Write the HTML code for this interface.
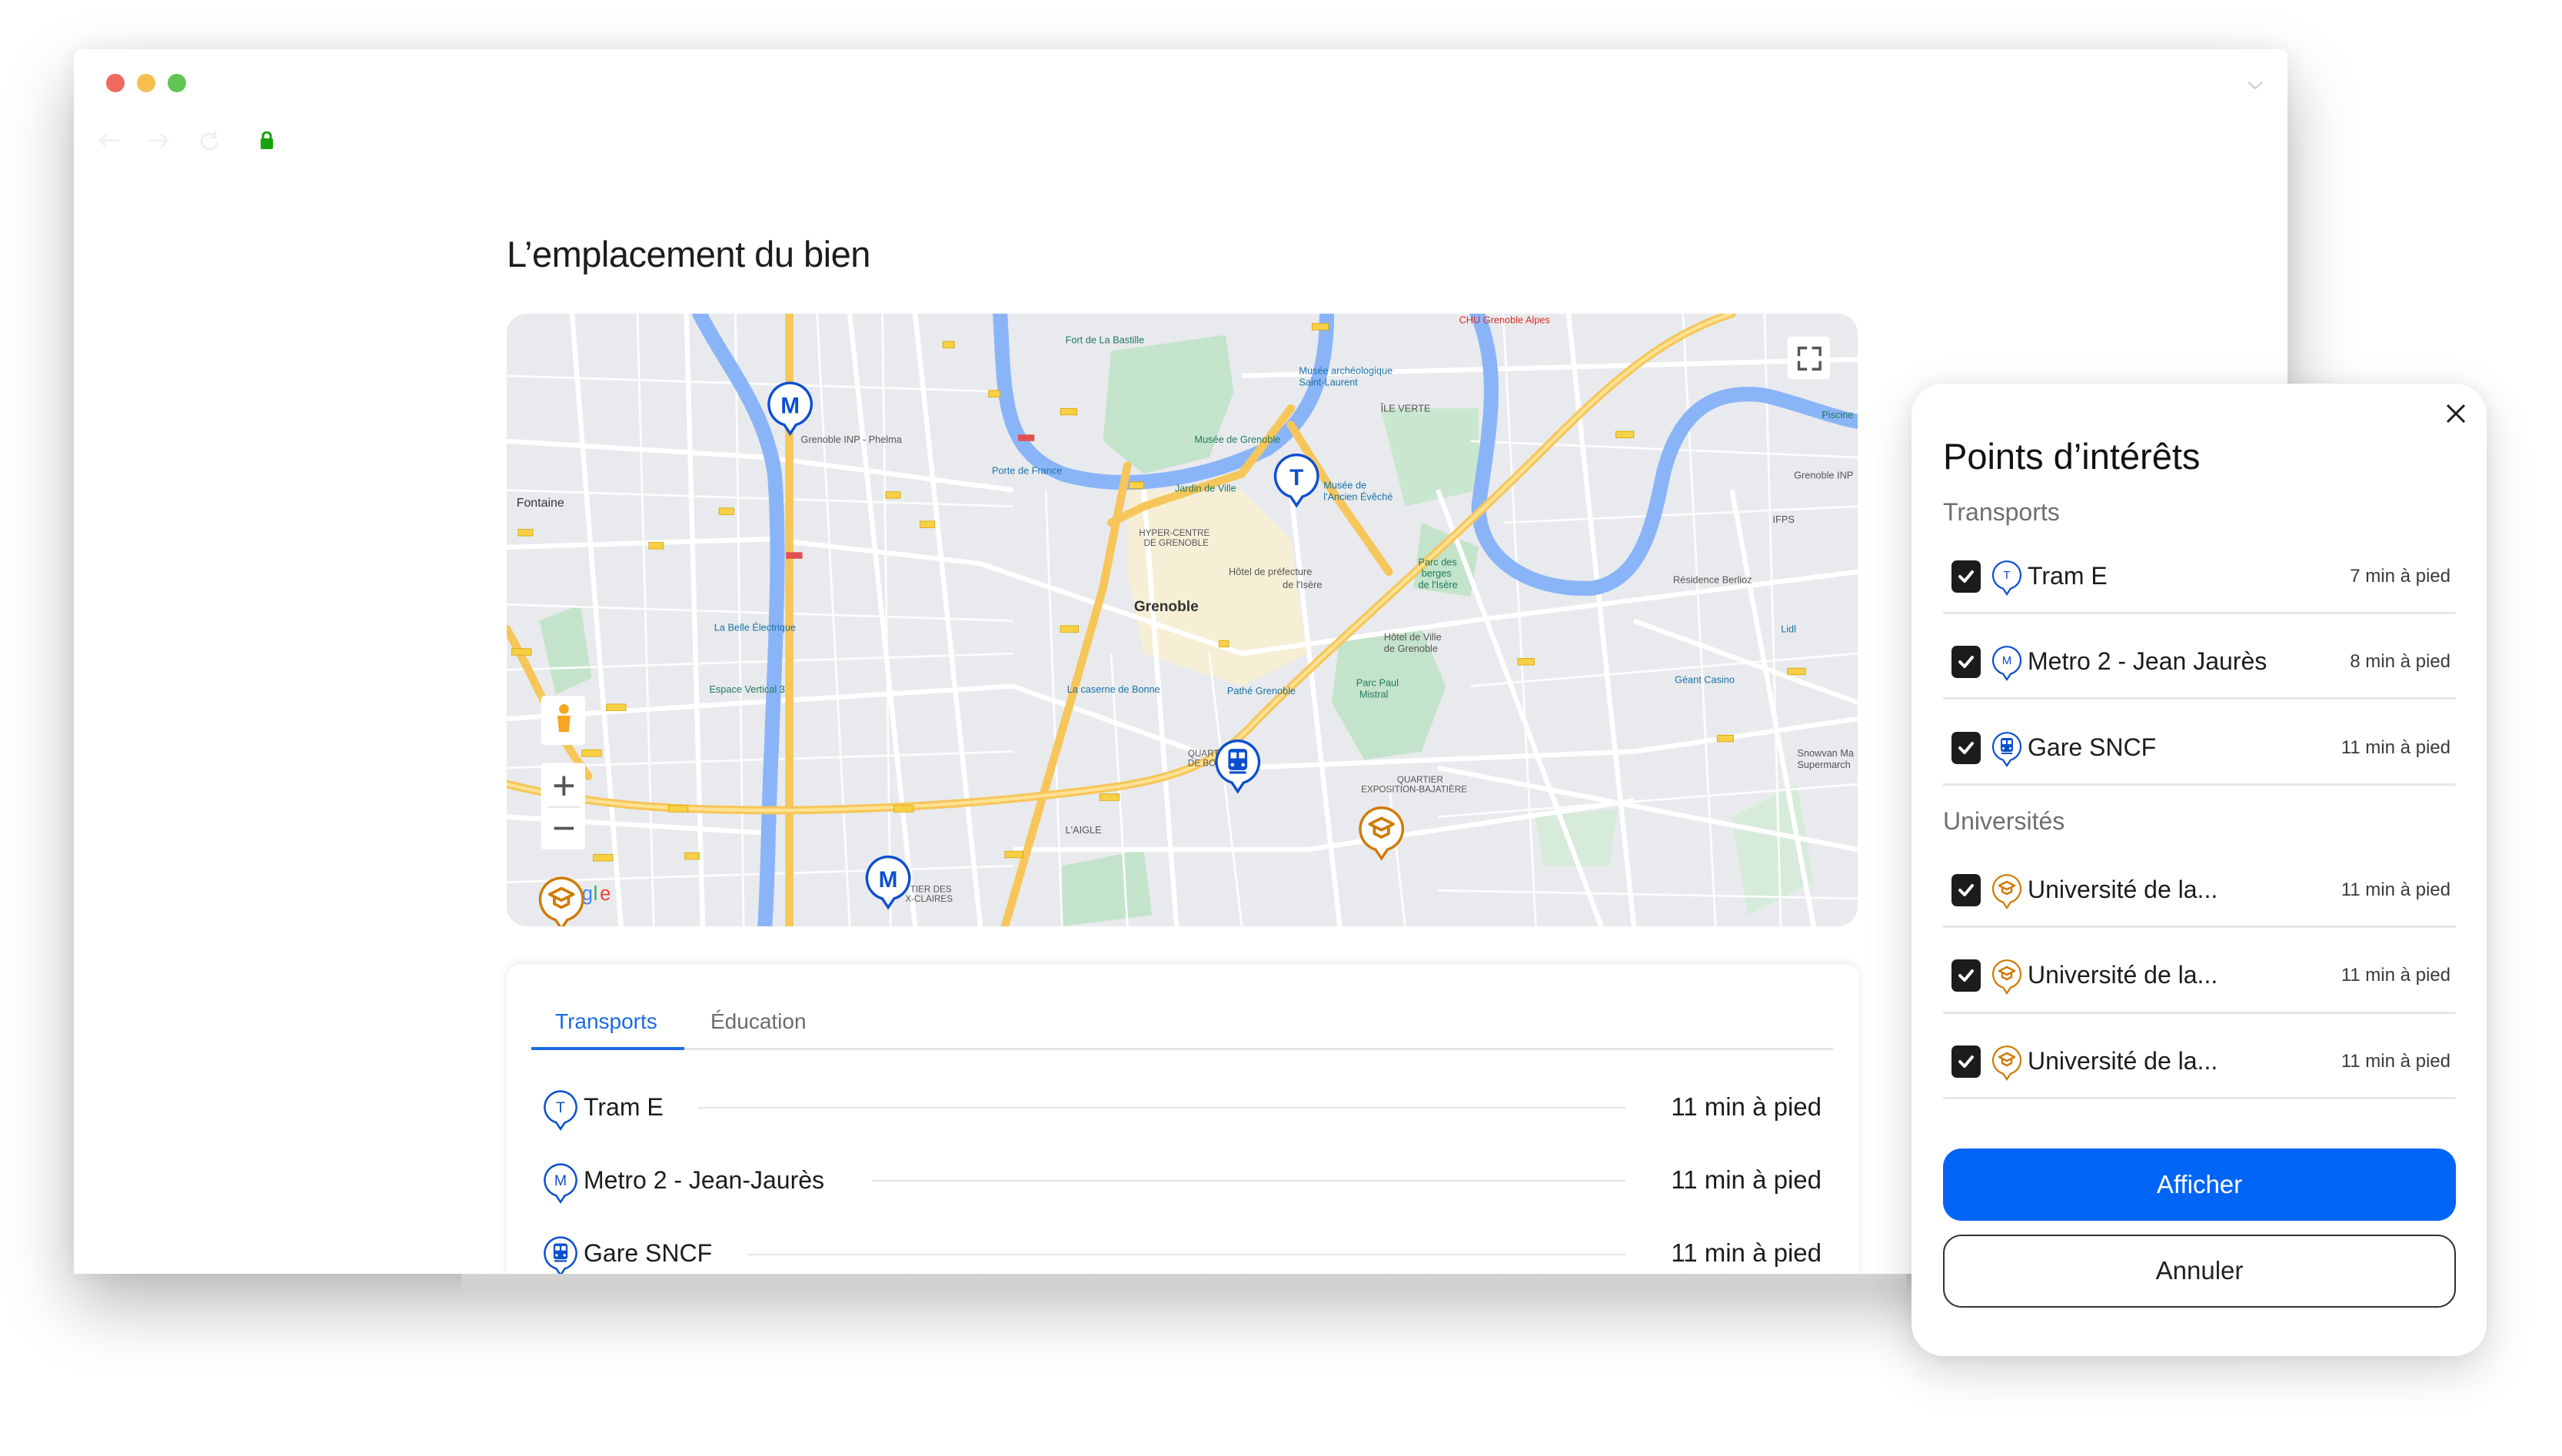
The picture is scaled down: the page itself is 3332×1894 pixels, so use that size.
<!DOCTYPE html>
<html><head><meta charset="utf-8">
<style>
*{box-sizing:border-box;margin:0;padding:0}
body{width:3332px;height:1894px;background:#fff;position:relative;overflow:hidden;font-family:"Liberation Sans",sans-serif;color:#1c1c1e}
.abs{position:absolute}
.win{left:96px;top:64px;width:2879px;height:1593px;background:#fff;box-shadow:0 40px 90px rgba(0,0,0,.28),0 0 30px rgba(0,0,0,.06);border-radius:10px 10px 0 0;overflow:hidden}
.dot{width:24px;height:24px;border-radius:50%;top:96px}
.title{left:659px;top:303px;font-size:47px;color:#1c1c1e;letter-spacing:-0.5px}
.map{left:659px;top:408px;width:1757px;height:797px;border-radius:26px;overflow:hidden;background:#e8eaed}
.card{left:659px;top:1254px;width:1759px;height:403px;background:#fff;border-radius:18px 18px 0 0;box-shadow:0 -2px 10px rgba(0,0,0,.10)}
.tab{top:1313px;font-size:28px}
.row{left:759px;font-size:32px;color:#1c1c1e}
.rt{font-size:33px;color:#1c1c1e;right:963px}
.hl{height:3px;background:#e4e4ea}
.panel{left:2486px;top:499px;width:748px;height:1265px;background:#fff;border-radius:42px;box-shadow:0 20px 60px rgba(0,0,0,.16),0 0 20px rgba(0,0,0,.06)}
.cb{left:2538px;width:38px;height:42px;background:#1c1c1e;border-radius:7px}
.pt{left:2637px;font-size:32px;color:#1c1c1e}
.pr{right:145px;font-size:24px;color:#3a3a3c}
.div{left:2527px;width:667px;height:3px;background:#e6e6ea}
.sec{left:2527px;font-size:32px;color:#6e6e73}
</style></head><body>
<svg width="0" height="0" style="position:absolute">
<defs>
<symbol id="pin" viewBox="0 0 40 48"><path d="M20 46 L15 38.5 A18 18 0 1 1 25 38.5 Z" fill="#fff" stroke="currentColor" stroke-width="2.2"/></symbol>
<symbol id="chk" viewBox="0 0 38 42"><path d="M11 21 L17 27 L27 15" fill="none" stroke="#fff" stroke-width="4" stroke-linecap="round" stroke-linejoin="round"/></symbol>
<symbol id="cap" viewBox="0 0 40 48"><path d="M20 46 L15 38.5 A18 18 0 1 1 25 38.5 Z" fill="#fff" stroke="#d07a00" stroke-width="2.2"/><path d="M10 17 L20 12 L30 17 L20 22 Z M14 19 V25 L20 28 L26 25 V19" fill="none" stroke="#d07a00" stroke-width="2.4" stroke-linejoin="round"/></symbol>
<symbol id="train" viewBox="0 0 40 48"><path d="M20 46 L15 38.5 A18 18 0 1 1 25 38.5 Z" fill="#fff" stroke="#0b4fd0" stroke-width="2.2"/><rect x="12" y="10" width="16" height="18" rx="3" fill="#0b4fd0"/><rect x="14" y="13" width="5" height="5" fill="#fff"/><rect x="21" y="13" width="5" height="5" fill="#fff"/><circle cx="15.5" cy="23.5" r="1.5" fill="#fff"/><circle cx="24.5" cy="23.5" r="1.5" fill="#fff"/><path d="M13 30 h14" stroke="#0b4fd0" stroke-width="2"/></symbol>
</defs></svg>

<div class="abs win"></div>
<div class="abs dot" style="left:138px;background:#ee6a5f"></div>
<div class="abs dot" style="left:178px;background:#f5bf4f"></div>
<div class="abs dot" style="left:218px;background:#61c554"></div>
<svg class="abs" style="left:126px;top:168px" width="160" height="30" viewBox="0 0 160 30" fill="none" stroke="#eef0f2" stroke-width="3" stroke-linecap="round"><path d="M4 15 H28 M4 15 L12 7 M4 15 L12 23"/><path d="M68 15 H92 M92 15 L84 7 M92 15 L84 23"/><path d="M154 10 A10 10 0 1 0 156 18 M154 4 V11 H147"/></svg>
<svg class="abs" style="left:338px;top:171px" width="18" height="24" viewBox="0 0 18 24"><path d="M4 10 V6 A5 5 0 0 1 14 6 V10" fill="none" stroke="#16a30c" stroke-width="3"/><rect x="1" y="9" width="16" height="14" rx="2" fill="#16a30c"/></svg>
<svg class="abs" style="left:2922px;top:104px" width="22" height="14" viewBox="0 0 22 14"><path d="M2 3 L11 11 L20 3" fill="none" stroke="#c8c8cc" stroke-width="2"/></svg>

<div class="abs title">L’emplacement du bien</div>

<div class="abs map">
<svg width="1757" height="797" viewBox="310 192 827 375" preserveAspectRatio="none" font-family="Liberation Sans,sans-serif">
<rect x="310" y="192" width="827" height="375" fill="#e8eaed"/>
<path d="M690 300 L760 300 L790 330 L800 400 L760 420 L700 400 L690 350 Z" fill="#f6efd6"/>
<path d="M680 215 L750 205 L755 240 L740 280 L700 290 L675 270 Z" fill="#c4e3cb"/>
<path d="M820 390 L870 385 L885 420 L870 460 L835 465 L815 430 Z" fill="#c4e3cb"/>
<path d="M330 380 L355 370 L362 415 L340 425 Z" fill="#c4e3cb"/>
<path d="M845 250 L905 250 L905 300 L860 310 Z" fill="#c9e6cf"/>
<path d="M870 320 L905 335 L900 365 L865 360 Z" fill="#c4e3cb"/>
<path d="M650 530 L700 520 L705 560 L650 567 Z" fill="#c4e3cb"/>
<path d="M1060 500 L1100 480 L1110 540 L1070 560 Z" fill="#d6ebd9"/>
<path d="M940 500 L990 495 L985 530 L945 530 Z" fill="#d6ebd9"/>
<g stroke="#fff" stroke-width="3" fill="none">
<path d="M310 335 L470 330 L600 345 L760 400 L900 380 L1137 350"/>
<path d="M310 440 L460 430 L620 420 L760 470 L1000 460 L1137 440"/>
<path d="M350 192 L380 567"/><path d="M420 192 L430 567"/><path d="M560 192 L600 567"/>
<path d="M700 300 L720 567"/><path d="M790 300 L820 567"/><path d="M880 300 L980 567"/>
<path d="M960 192 L1000 567"/><path d="M1060 300 L1110 567"/>
<path d="M310 270 L470 280 L620 300"/><path d="M520 192 L560 567"/>
<path d="M880 470 L1137 520"/><path d="M1000 380 L1137 430"/><path d="M310 500 L470 510"/>
<path d="M620 520 L800 520 L1000 490"/><path d="M760 230 L1137 220"/>
</g>
<g stroke="#fff" stroke-width="1.3" fill="none" opacity=".9">
<path d="M310 230 L620 240"/><path d="M310 300 L620 310"/><path d="M310 370 L620 380"/><path d="M310 410 L620 400"/><path d="M310 470 L620 460"/><path d="M310 540 L620 530"/>
<path d="M900 270 L1137 280"/><path d="M920 320 L1137 310"/><path d="M900 420 L1137 400"/><path d="M880 500 L1137 480"/><path d="M880 545 L1137 550"/>
<path d="M390 192 L400 567"/><path d="M450 192 L455 567"/><path d="M500 192 L520 567"/><path d="M540 192 L545 567"/><path d="M640 300 L650 567"/><path d="M680 400 L690 567"/><path d="M740 400 L760 567"/><path d="M850 480 L860 567"/><path d="M920 192 L940 567"/><path d="M1030 192 L1050 567"/><path d="M1080 192 L1090 567"/>
</g>
<g fill="none" stroke="#8ab4f8" stroke-width="9" stroke-linecap="round">
<path d="M428 192 C445 225 468 250 474 290 C478 340 474 400 472 460 C470 500 470 540 468 567"/>
<path d="M612 192 C615 240 612 275 650 290 C690 302 740 292 775 275 C805 255 812 225 812 192"/>
<path d="M904 192 C920 230 910 270 905 310 C905 345 940 362 975 360 C1005 355 1012 320 1018 290 C1028 250 1050 238 1080 242 C1105 248 1120 255 1137 258"/>
</g>
<g fill="none" stroke="#f7c65a" stroke-width="5" stroke-linecap="round">
<path d="M310 480 C360 492 400 496 480 496 C560 495 620 490 680 482 C730 475 750 462 770 440 C820 390 880 340 950 270 C990 230 1020 205 1060 192"/>
<path d="M483 192 L483 567"/>
<path d="M690 285 L675 360 L655 430 L615 567"/>
<path d="M310 385 C330 420 340 450 360 475"/>
<path d="M790 260 L815 300 L850 350"/>
<path d="M790 250 L760 290 L700 310 L680 320"/>
</g>
<g fill="none" stroke="#fde293" stroke-width="2"><path d="M310 480 C360 492 400 496 480 496 C560 495 620 490 680 482 C730 475 750 462 770 440 C820 390 880 340 950 270 C990 230 1020 205 1060 192"/></g>
<g font-size="7" fill="#555">
<text x="316" y="310" font-size="7.5" fill="#333">Fontaine</text>
<text x="694" y="374" font-size="9" font-weight="bold" fill="#333">Grenoble</text>
<text x="697" y="328" font-size="5.5">HYPER-CENTRE</text><text x="700" y="334" font-size="5.5">DE GRENOBLE</text>
<text x="752" y="352" font-size="6">Hôtel de préfecture</text><text x="785" y="360" font-size="6">de l'Isère</text>
<text x="490" y="271" font-size="6">Grenoble INP - Phelma</text>
<text x="845" y="252" font-size="6">ÎLE VERTE</text>
<text x="652" y="210" font-size="6" fill="#1f7a5c">Fort de La Bastille</text>
<text x="795" y="229" font-size="6" fill="#1a73a8">Musée archéologique</text><text x="795" y="236" font-size="6" fill="#1a73a8">Saint-Laurent</text>
<text x="893" y="198" font-size="6" fill="#d93025">CHU Grenoble Alpes</text>
<text x="731" y="271" font-size="6" fill="#1f7a5c">Musée de Grenoble</text>
<text x="607" y="290" font-size="6" fill="#1a73a8">Porte de France</text>
<text x="719" y="301" font-size="6" fill="#1f7a5c">Jardin de Ville</text>
<text x="810" y="299" font-size="6" fill="#1a73a8">Musée de</text><text x="810" y="306" font-size="6" fill="#1a73a8">l'Ancien Évêché</text>
<text x="868" y="346" font-size="6" fill="#1f7a5c">Parc des</text><text x="870" y="353" font-size="6" fill="#1f7a5c">berges</text><text x="868" y="360" font-size="6" fill="#1f7a5c">de l'Isère</text>
<text x="437" y="386" font-size="6" fill="#1a73a8">La Belle Électrique</text>
<text x="434" y="424" font-size="6" fill="#1f7a5c">Espace Vertical 3</text>
<text x="653" y="424" font-size="6" fill="#1a73a8">La caserne de Bonne</text>
<text x="751" y="425" font-size="6" fill="#1a73a8">Pathé Grenoble</text>
<text x="830" y="420" font-size="6" fill="#1f7a5c">Parc Paul</text><text x="832" y="427" font-size="6" fill="#1f7a5c">Mistral</text>
<text x="847" y="392" font-size="6">Hôtel de Ville</text><text x="847" y="399" font-size="6">de Grenoble</text>
<text x="1024" y="357" font-size="6">Résidence Berlioz</text>
<text x="1025" y="418" font-size="6" fill="#1a73a8">Géant Casino</text>
<text x="1098" y="293" font-size="6">Grenoble INP</text>
<text x="1085" y="320" font-size="6">IFPS</text>
<text x="1090" y="387" font-size="6" fill="#1a73a8">Lidl</text>
<text x="1115" y="256" font-size="6" fill="#1f7a5c">Piscine</text>
<text x="1100" y="463" font-size="6">Snowvan Ma</text><text x="1100" y="470" font-size="6">Supermarch</text>
<text x="855" y="479" font-size="5.5">QUARTIER</text><text x="833" y="485" font-size="5.5">EXPOSITION-BAJATIÈRE</text>
<text x="652" y="510" font-size="6">L'AIGLE</text>
<text x="557" y="546" font-size="5.5">TIER DES</text><text x="554" y="552" font-size="5.5">X-CLAIRES</text>
<text x="727" y="463" font-size="5.5">QUART</text><text x="727" y="469" font-size="5.5">DE BO</text>
</g>
<g fill="#f7d046" stroke="#d8a600" stroke-width=".4">
<rect x="577" y="209" width="7" height="4"/><rect x="605" y="239" width="7" height="4"/><rect x="649" y="250" width="10" height="4"/><rect x="803" y="198" width="10" height="4"/>
<rect x="542" y="301" width="9" height="4"/><rect x="563" y="319" width="9" height="4"/><rect x="440" y="311" width="9" height="4"/><rect x="397" y="332" width="9" height="4"/><rect x="317" y="324" width="9" height="4"/>
<rect x="649" y="383" width="11" height="4"/><rect x="746" y="392" width="6" height="4"/><rect x="929" y="403" width="10" height="4"/><rect x="1094" y="409" width="11" height="4"/><rect x="1051" y="450" width="10" height="4"/><rect x="989" y="264" width="11" height="4"/>
<rect x="371" y="431" width="12" height="4"/><rect x="356" y="459" width="12" height="4"/><rect x="409" y="493" width="12" height="4"/><rect x="547" y="493" width="12" height="4"/><rect x="673" y="486" width="12" height="4"/><rect x="615" y="521" width="11" height="4"/><rect x="363" y="523" width="12" height="4"/><rect x="419" y="522" width="9" height="4"/><rect x="313" y="397" width="12" height="4"/><rect x="691" y="295" width="9" height="4"/>
</g>
<rect x="623" y="266" width="10" height="4" fill="#e05050"/><rect x="481" y="338" width="10" height="4" fill="#e05050"/>
<rect x="1094" y="206" width="26" height="26" rx="2" fill="#fff"/>
<path d="M1101 218 V213 H1106 M1109 213 H1114 V218 M1114 221 V226 H1109 M1106 226 H1101 V221" fill="none" stroke="#555" stroke-width="1.6"/>
<rect x="331" y="426" width="27" height="30" rx="2" fill="#fff"/>
<circle cx="345" cy="434" r="3" fill="#f5a623"/><path d="M341 438 H349 L348 448 H342 Z" fill="#f5a623"/>
<rect x="331" y="467" width="27" height="53" rx="2" fill="#fff"/>
<path d="M339 481 H351 M345 475 V487 M339 507 H351" stroke="#555" stroke-width="1.8"/><path d="M335 494 H355" stroke="#e6e6e6" stroke-width="1"/>
<text x="334" y="551" font-size="12" fill="#4285f4">G</text><text x="342" y="551" font-size="12" fill="#ea4335">o</text><text x="349" y="551" font-size="12" fill="#fbbc05">o</text><text x="356" y="551" font-size="12" fill="#4285f4">g</text><text x="363" y="551" font-size="12" fill="#34a853">l</text><text x="367" y="551" font-size="12" fill="#ea4335">e</text>
<g color="#0b4fd0">
<use href="#pin" x="469" y="232" width="29" height="35"/>
<use href="#pin" x="779" y="276" width="29" height="35"/>
<use href="#pin" x="529" y="522" width="29" height="35"/>
</g>
<text x="483.5" y="253" font-size="14" fill="#0b4fd0" text-anchor="middle" font-weight="bold">M</text>
<text x="793.5" y="297" font-size="14" fill="#0b4fd0" text-anchor="middle" font-weight="bold">T</text>
<text x="543.5" y="543" font-size="14" fill="#0b4fd0" text-anchor="middle" font-weight="bold">M</text>
<use href="#train" x="743" y="451" width="29" height="35"/>
<use href="#cap" x="831" y="492" width="29" height="35"/>
<use href="#cap" x="329" y="535" width="29" height="35"/>
</svg>
</div>

<div class="abs card"></div>
<div class="abs tab" style="left:722px;color:#1a6be6">Transports</div>
<div class="abs tab" style="left:924px;color:#6b6b70">Éducation</div>
<div class="abs" style="left:691px;top:1362px;width:199px;height:4px;background:#1a6be6"></div>
<div class="abs hl" style="left:890px;top:1363px;width:1494px"></div>

<svg class="abs" style="left:706px;top:1416px" width="46" height="55" viewBox="0 0 40 48" color="#0b4fd0"><use href="#pin"/><text x="20" y="27" font-size="17" text-anchor="middle" fill="#0b4fd0" font-family="Liberation Sans">T</text></svg>
<div class="abs row" style="top:1422px">Tram E</div>
<div class="abs hl" style="left:908px;top:1440px;width:1206px;height:2px"></div>
<div class="abs rt" style="top:1421px">11 min à pied</div>

<svg class="abs" style="left:706px;top:1511px" width="46" height="55" viewBox="0 0 40 48" color="#0b4fd0"><use href="#pin"/><text x="20" y="27" font-size="17" text-anchor="middle" fill="#0b4fd0" font-family="Liberation Sans">M</text></svg>
<div class="abs row" style="top:1517px">Metro 2 - Jean-Jaurès</div>
<div class="abs hl" style="left:1134px;top:1535px;width:980px;height:2px"></div>
<div class="abs rt" style="top:1516px">11 min à pied</div>

<svg class="abs" style="left:706px;top:1606px" width="46" height="55" viewBox="0 0 40 48"><use href="#train"/></svg>
<div class="abs row" style="top:1612px">Gare SNCF</div>
<div class="abs hl" style="left:973px;top:1631px;width:1141px;height:2px"></div>
<div class="abs rt" style="top:1611px">11 min à pied</div>

<!-- clip below window -->
<div class="abs" style="left:600px;top:1657px;width:1880px;height:40px;background:linear-gradient(#d4d4d4,rgba(255,255,255,0))"></div>

<div class="abs panel"></div>
<svg class="abs" style="left:3180px;top:524px" width="28" height="28" viewBox="0 0 28 28"><path d="M3 3 L25 25 M25 3 L3 25" stroke="#1c1c1e" stroke-width="3"/></svg>
<div class="abs" style="left:2527px;top:566px;font-size:47px;color:#111">Points d’intérêts</div>
<div class="abs sec" style="top:648px">Transports</div>

<div class="abs cb" style="top:729px"><svg width="38" height="42"><use href="#chk"/></svg></div>
<svg class="abs" style="left:2590px;top:727px" width="40" height="48" viewBox="0 0 40 48" color="#0b4fd0"><use href="#pin"/><text x="20" y="26" font-size="15" text-anchor="middle" fill="#0b4fd0" font-family="Liberation Sans">T</text></svg>
<div class="abs pt" style="top:731px">Tram E</div>
<div class="abs pr" style="top:736px">7 min à pied</div>
<div class="abs div" style="top:796px"></div>

<div class="abs cb" style="top:840px"><svg width="38" height="42"><use href="#chk"/></svg></div>
<svg class="abs" style="left:2590px;top:838px" width="40" height="48" viewBox="0 0 40 48" color="#0b4fd0"><use href="#pin"/><text x="20" y="26" font-size="15" text-anchor="middle" fill="#0b4fd0" font-family="Liberation Sans">M</text></svg>
<div class="abs pt" style="top:842px">Metro 2 - Jean Jaurès</div>
<div class="abs pr" style="top:847px">8 min à pied</div>
<div class="abs div" style="top:907px"></div>

<div class="abs cb" style="top:952px"><svg width="38" height="42"><use href="#chk"/></svg></div>
<svg class="abs" style="left:2590px;top:950px" width="40" height="48" viewBox="0 0 40 48"><use href="#train"/></svg>
<div class="abs pt" style="top:954px">Gare SNCF</div>
<div class="abs pr" style="top:959px">11 min à pied</div>
<div class="abs div" style="top:1019px"></div>

<div class="abs sec" style="top:1050px">Universités</div>

<div class="abs cb" style="top:1137px"><svg width="38" height="42"><use href="#chk"/></svg></div>
<svg class="abs" style="left:2590px;top:1135px" width="40" height="48" viewBox="0 0 40 48"><use href="#cap"/></svg>
<div class="abs pt" style="top:1139px">Université de la...</div>
<div class="abs pr" style="top:1144px">11 min à pied</div>
<div class="abs div" style="top:1204px"></div>

<div class="abs cb" style="top:1248px"><svg width="38" height="42"><use href="#chk"/></svg></div>
<svg class="abs" style="left:2590px;top:1246px" width="40" height="48" viewBox="0 0 40 48"><use href="#cap"/></svg>
<div class="abs pt" style="top:1250px">Université de la...</div>
<div class="abs pr" style="top:1255px">11 min à pied</div>
<div class="abs div" style="top:1316px"></div>

<div class="abs cb" style="top:1360px"><svg width="38" height="42"><use href="#chk"/></svg></div>
<svg class="abs" style="left:2590px;top:1358px" width="40" height="48" viewBox="0 0 40 48"><use href="#cap"/></svg>
<div class="abs pt" style="top:1362px">Université de la...</div>
<div class="abs pr" style="top:1367px">11 min à pied</div>
<div class="abs div" style="top:1427px"></div>

<div class="abs" style="left:2527px;top:1494px;width:667px;height:94px;background:#0064f5;border-radius:24px;color:#fff;font-size:33px;text-align:center;line-height:94px">Afficher</div>
<div class="abs" style="left:2527px;top:1606px;width:667px;height:95px;border:2.5px solid #333;border-radius:24px;color:#222;font-size:33px;text-align:center;line-height:90px">Annuler</div>
</body></html>
